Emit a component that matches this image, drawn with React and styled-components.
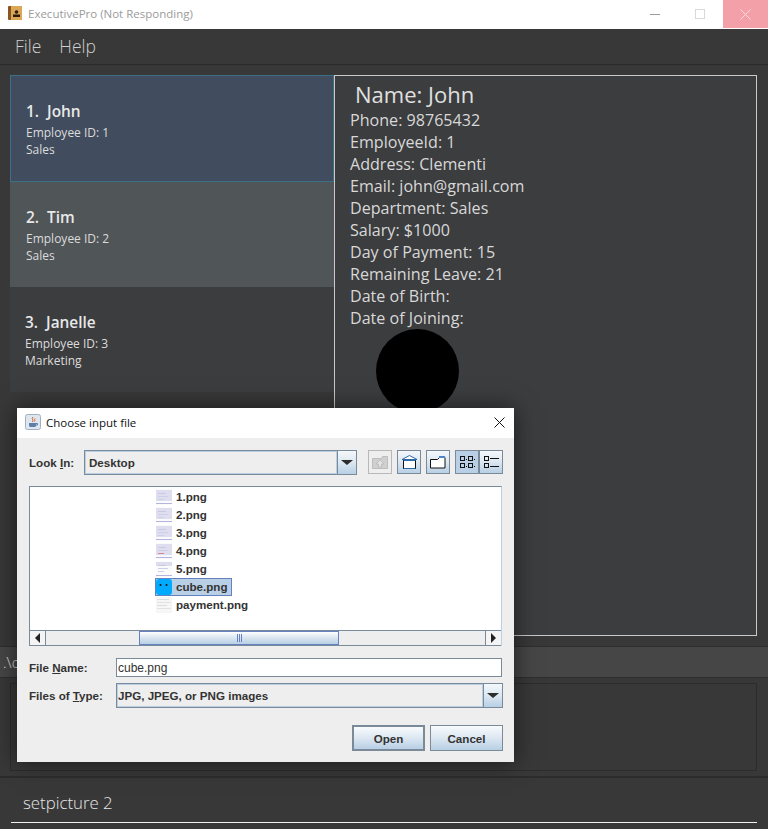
import React from "react";
import styled, { createGlobalStyle } from "styled-components";

const Global = createGlobalStyle`
  html, body { margin: 0; padding: 0; background: #383838; }
  * { box-sizing: border-box; }
`;

const Screen = styled.div`
  position: relative;
  width: 768px;
  height: 829px;
  overflow: hidden;
  background: #383838;
  display: flex;
  flex-direction: column;
  font-family: "Open Sans", "Noto Sans", sans-serif;
`;

const TitleBar = styled.div`
  height: 29px;
  flex: none;
  background: #fff;
  display: flex;
  align-items: flex-start;
`;
const AppIcon = styled.svg`
  width: 14px;
  height: 14px;
  margin: 6px 6px 0 8px;
  flex: none;
`;
const WindowTitle = styled.div`
  flex: 1;
  font-size: 11.5px;
  line-height: 28px;
  color: #9b9b9b;
  white-space: nowrap;
`;
const WinButton = styled.div`
  width: ${(p) => p.$w}px;
  height: 28px;
  display: flex;
  align-items: center;
  justify-content: center;
  background: ${(p) => p.$bg || "transparent"};
`;

const MenuBar = styled.div`
  height: 36px;
  flex: none;
  display: flex;
  align-items: center;
  gap: 18px;
  padding: 0 15px 2px;
  background: #383838;
  border-bottom: 1px solid #2a2a2a;
`;
const MenuItem = styled.span`
  font-size: 17.5px;
  font-weight: 300;
  color: #cfcfcf;
`;

const Main = styled.div`
  height: 581px;
  flex: none;
  display: flex;
  padding: 10px 11px 10px 10px;
  background: #383838;
`;
const List = styled.div`
  width: 324px;
  flex: none;
`;
const Card = styled.div`
  height: ${(p) => p.$h}px;
  background: ${(p) => p.$bg};
  border: ${(p) => (p.$border ? `1px solid ${p.$border}` : "none")};
  padding: ${(p) => p.$pt}px 0 0 ${(p) => p.$pl}px;
  display: flex;
  flex-direction: column;
`;
const CardName = styled.div`
  font-size: 15.4px;
  font-weight: 600;
  line-height: 22px;
  color: #e8e8e8;
  white-space: pre;
`;
const CardLine = styled.div`
  font-size: 12px;
  line-height: 17px;
  color: #dcdcdc;
`;
const CardId = styled(CardLine)`
  margin-top: 1px;
`;

const Details = styled.div`
  flex: 1;
  background: #3c3d3f;
  border: 1px solid #c9c9c9;
  padding: 3px 0 0 15px;
  color: #d8d8d8;
`;
const DetailName = styled.div`
  font-size: 22px;
  line-height: 30px;
  margin-left: 5px;
  color: #e0e0e0;
`;
const DetailLine = styled.div`
  font-size: 16.1px;
  line-height: 22px;
`;
const Avatar = styled.div`
  width: 83px;
  height: 84px;
  margin: 0 0 0 26px;
  border-radius: 50%;
  background: #000;
`;

const ResultHeader = styled.div`
  height: 32px;
  flex: none;
  background: #464646;
  border-top: 1px solid #2e2e2e;
  border-bottom: 1px solid #2e2e2e;
  padding-left: 3px;
  font-size: 15px;
  line-height: 31px;
  font-weight: 300;
  color: #e4e4e4;
`;
const ResultArea = styled.div`
  height: 100px;
  flex: none;
  padding: 5px 10px 5px 10px;
  border-bottom: 2px solid #2c2c2c;
`;
const ResultBox = styled.div`
  width: 747px;
  height: 88px;
  border: 1px solid #2c2c2c;
  background: #383838;
`;
const CommandArea = styled.div`
  flex: 1;
  padding: 14px 0 0 11px;
`;
const CommandInput = styled.div`
  width: 746px;
  height: 31px;
  border-bottom: 1px solid #f0f0f0;
  padding-left: 12px;
  font-size: 16.8px;
  line-height: 22px;
  font-weight: 300;
  color: #e6e6e6;
`;

/* Dialog */
const Dialog = styled.div`
  position: absolute;
  left: 17px;
  top: 408px;
  width: 497px;
  height: 354px;
  background: #eeeeee;
  box-shadow: 0 0 22px rgba(0, 0, 0, 0.55);
  display: flex;
  flex-direction: column;
  font-family: "Liberation Sans", Arial, sans-serif;
  font-size: 11.6px;
  font-weight: 700;
  color: #333;
`;
const DialogTitle = styled.div`
  height: 30px;
  flex: none;
  background: #fff;
  display: flex;
  align-items: center;
  padding: 0 9px 2px 8px;
  font-family: "Open Sans", "Noto Sans", sans-serif;
  font-weight: 400;
  font-size: 11.5px;
  color: #111;
`;
const DialogIcon = styled.svg`
  width: 16px;
  height: 16px;
  margin-right: 5px;
  flex: none;
`;
const DialogTitleText = styled.span`
  flex: 1;
`;
const DialogBody = styled.div`
  flex: 1;
  padding: 12px 11px 0 12px;
  display: flex;
  flex-direction: column;
`;
const TopRow = styled.div`
  display: flex;
  height: 25px;
  align-items: flex-start;
`;
const Label = styled.label`
  flex: none;
  width: ${(p) => p.$w}px;
  line-height: ${(p) => p.$lh || 25}px;
`;
const Combo = styled.div`
  width: ${(p) => p.$w}px;
  height: 25px;
  flex: none;
  display: flex;
  border: 1px solid #7a8a99;
  background: #eeeeee;
`;
const ComboValue = styled.div`
  flex: 1;
  border: 1px solid #b8cfe5;
  padding-left: ${(p) => p.$pl}px;
  line-height: 22px;
  color: #333;
`;
const ComboArrow = styled.div`
  width: 19px;
  flex: none;
  border-left: 1px solid #7a8a99;
  background: linear-gradient(#f4f8fb, #dce7f1 50%, #b8cfe5);
  display: flex;
  align-items: center;
  justify-content: center;
  &::after {
    content: "";
    border-left: 6px solid transparent;
    border-right: 6px solid transparent;
    border-top: 5px solid #2c2c2c;
  }
`;
const ToolGroup = styled.div`
  display: flex;
  margin-left: ${(p) => p.$ml}px;
`;
const ToolButton = styled.div`
  width: 24px;
  height: 24px;
  border: 1px solid ${(p) => (p.$disabled ? "#b8b8b8" : "#7a8a99")};
  background: ${(p) =>
    p.$disabled
      ? "#eeeeee"
      : p.$active
      ? "#b8cfe5"
      : "linear-gradient(#f4f8fb, #dce7f1 50%, #b8cfe5)"};
  display: flex;
  align-items: center;
  justify-content: center;
`;
const FileBox = styled.div`
  margin-top: 11px;
  width: 473px;
  height: 160px;
  flex: none;
  border: 1px solid #7a8a99;
  border-bottom: none;
  border-right-color: #b8cfe5;
  background: #fff;
  display: flex;
  flex-direction: column;
`;
const FileList = styled.div`
  flex: 1;
  padding: 1px 0 0 126px;
`;
const FileRow = styled.div`
  height: 18px;
  display: flex;
  align-items: center;
  gap: 4px;
  white-space: nowrap;
`;
const FileName = styled.span`
  line-height: 16px;
  padding: 0 2px 0 0;
  color: #333;
`;
const SelectedRow = styled.div`
  display: inline-flex;
  align-items: center;
  gap: 4px;
  height: 18px;
  border: 1px solid #6382bf;
  background: #b8cfe5;
  margin-left: -1px;
  padding-right: 1px;
`;
const Scrollbar = styled.div`
  height: 16px;
  flex: none;
  display: flex;
  background: #eeeeee;
  border-top: 1px solid #7a8a99;
  border-bottom: 1px solid #7a8a99;
`;
const ScrollArrow = styled.div`
  width: 16px;
  flex: none;
  background: #f4f4f4;
  border-${(p) => (p.$right ? "left" : "right")}: 1px solid #7a8a99;
  display: flex;
  align-items: center;
  justify-content: center;
  &::after {
    content: "";
    border-top: 5px solid transparent;
    border-bottom: 5px solid transparent;
    ${(p) => (p.$right ? "border-left: 5px solid #222;" : "border-right: 5px solid #222;")}
  }
`;
const ScrollTrack = styled.div`
  flex: 1;
  padding-left: 93px;
`;
const ScrollThumb = styled.div`
  width: 200px;
  height: 100%;
  border: 1px solid #6382bf;
  background: linear-gradient(#fff, #dce7f1 45%, #b8cfe5);
  display: flex;
  align-items: center;
  justify-content: center;
  gap: 1px;
`;
const Grip = styled.i`
  width: 1px;
  height: 8px;
  background: #6382bf;
`;
const NameRow = styled.div`
  margin-top: 12px;
  display: flex;
  height: 19px;
`;
const NameInput = styled.div`
  width: 386px;
  height: 19px;
  border: 1px solid #7a8a99;
  background: #fff;
  padding-left: 1px;
  font-size: 12px;
  font-weight: 400;
  line-height: 19px;
  color: #333;
`;
const TypeRow = styled.div`
  margin-top: 6px;
  display: flex;
  height: 25px;
`;
const Buttons = styled.div`
  margin-top: 17px;
  display: flex;
  justify-content: flex-end;
  gap: 5px;
`;
const Button = styled.div`
  height: 26px;
  width: 73px;
  border: ${(p) => (p.$default ? "2px" : "1px")} solid #7a8a99;
  background: linear-gradient(#f8fbfd, #dce7f1 50%, #b8cfe5);
  text-align: center;
  line-height: ${(p) => (p.$default ? 24 : 26)}px;
  color: #333;
`;

const Thumb = ({ variant }) => (
  <svg width="16" height="16" viewBox="0 0 16 16" style={{ flex: "none" }}>
    <rect width="16" height="16" fill="#fafafa" />
    <rect y="1" width="16" height={variant === 5 ? 4 : 11} fill="#dedeef" />
    <rect x="2" y="4" width="8" height="1" fill="#c9c9e6" />
    <rect x="2" y="7" width="10" height="1" fill="#cfcfe9" />
    <rect x="2" y="10" width="6" height="1" fill={variant === 4 ? "#d88" : "#cfcfe9"} />
    <rect y="14" width="16" height="1" fill="#b4b4e0" />
  </svg>
);
const PaymentThumb = () => (
  <svg width="16" height="16" viewBox="0 0 16 16" style={{ flex: "none" }}>
    <rect width="16" height="16" fill="#f6f6f6" />
    <rect x="1" y="2" width="12" height="1" fill="#ddd" />
    <rect x="1" y="5" width="14" height="1" fill="#e2e2e2" />
    <rect x="1" y="8" width="10" height="1" fill="#ddd" />
    <rect x="1" y="11" width="14" height="1" fill="#e2e2e2" />
  </svg>
);
const CubeThumb = () => (
  <svg width="16" height="16" viewBox="0 0 16 16" style={{ flex: "none" }}>
    <rect width="16" height="16" rx="3" fill="#00aaff" />
    <circle cx="4.5" cy="6" r="1" fill="#111" />
    <circle cx="10.5" cy="6" r="1" fill="#111" />
  </svg>
);

const UpFolder = () => (
  <svg width="20" height="18" viewBox="0 0 20 18">
    <path d="M2.500 5.500h9l1-2h5v12h-15z" fill="#cfcfcf" stroke="#bdbdbd" />
    <path d="M10 7l-4 4h2.500v3h3v-3H14z" fill="#e4e4e4" stroke="#b5b5b5" strokeWidth=".7" />
  </svg>
);
const HomeIcon = () => (
  <svg width="18" height="18" viewBox="0 0 18 18">
    <path d="M2 6.500L9.500 2.500l7.500 4z" fill="#fff" stroke="#2f6aa8" />
    <rect x="3.500" y="7.500" width="12" height="8" fill="#fff" stroke="#111" />
    <path d="M3.500 7.500h12M3.500 15.500h12" stroke="#2f6aa8" />
  </svg>
);
const NewFolderIcon = () => (
  <svg width="18" height="18" viewBox="0 0 18 18">
    <path d="M1.500 6.500h7l2-2h5.500v10.500h-14.500z" fill="#fff" stroke="#111" />
    <rect x="10" y="3" width="6" height="2" fill="#4c86c6" />
  </svg>
);
const DetailsIcon = () => (
  <svg width="18" height="18" viewBox="0 0 18 18" fill="none" stroke="#111">
    <rect x="2.500" y="3.500" width="4" height="4" />
    <rect x="2.500" y="10.500" width="4" height="4" />
    <rect x="10.500" y="3.500" width="4" height="4" />
    <rect x="10.500" y="10.500" width="4" height="4" />
    <path d="M8 6.500h1M8 13.500h1M16 6.500h1M16 13.500h1" />
  </svg>
);
const ListIcon = () => (
  <svg width="18" height="18" viewBox="0 0 18 18" fill="none" stroke="#111">
    <rect x="2.500" y="3.500" width="4" height="4" />
    <rect x="2.500" y="10.500" width="4" height="4" />
    <path d="M8 5.500h9M8 13.500h9" />
  </svg>
);

const files = [1, 2, 3, 4, 5];

export default function App() {
  return (
    <Screen>
      <Global />
      <TitleBar>
        <AppIcon viewBox="0 0 14 14">
          <rect width="14" height="14" rx="1" fill="#8a5423" />
          <rect x="3" y="0" width="11" height="14" fill="#dba655" />
          <circle cx="8.500" cy="6" r="1.800" fill="#2a1c0c" />
          <rect x="5" y="8.500" width="7" height="2.500" fill="#2a1c0c" />
        </AppIcon>
        <WindowTitle>ExecutivePro (Not Responding)</WindowTitle>
        <WinButton $w={43}>
          <svg width="10" height="10" viewBox="0 0 10 10">
            <path d="M0 5.500h10" stroke="#9d9d9d" />
          </svg>
        </WinButton>
        <WinButton $w={47}>
          <svg width="10" height="10" viewBox="0 0 10 10">
            <rect x=".5" y=".5" width="9" height="9" fill="none" stroke="#d9d9d9" />
          </svg>
        </WinButton>
        <WinButton $w={45} $bg="#f4a0a8">
          <svg width="11" height="11" viewBox="0 0 11 11">
            <path d="M.5.500l10 10M10.500.500l-10 10" stroke="#fbd9dc" />
          </svg>
        </WinButton>
      </TitleBar>

      <MenuBar>
        <MenuItem>File</MenuItem>
        <MenuItem>Help</MenuItem>
      </MenuBar>

      <Main>
        <List>
          <Card $h={107} $bg="#414c5e" $border="#3d7087" $pt={25} $pl={15}>
            <CardName>1.  John</CardName>
            <CardId>Employee ID: 1</CardId>
            <CardLine>Sales</CardLine>
          </Card>
          <Card $h={105} $bg="#505558" $pt={25} $pl={16}>
            <CardName>2.  Tim</CardName>
            <CardId>Employee ID: 2</CardId>
            <CardLine>Sales</CardLine>
          </Card>
          <Card $h={105} $bg="#3c3d3f" $pt={25} $pl={15}>
            <CardName>3.  Janelle</CardName>
            <CardId>Employee ID: 3</CardId>
            <CardLine>Marketing</CardLine>
          </Card>
        </List>
        <Details>
          <DetailName>Name: John</DetailName>
          <DetailLine>Phone: 98765432</DetailLine>
          <DetailLine>EmployeeId: 1</DetailLine>
          <DetailLine>Address: Clementi</DetailLine>
          <DetailLine>Email: john@gmail.com</DetailLine>
          <DetailLine>Department: Sales</DetailLine>
          <DetailLine>Salary: $1000</DetailLine>
          <DetailLine>Day of Payment: 15</DetailLine>
          <DetailLine>Remaining Leave: 21</DetailLine>
          <DetailLine>Date of Birth:</DetailLine>
          <DetailLine>Date of Joining:</DetailLine>
          <Avatar />
        </Details>
      </Main>

      <ResultHeader>.\c</ResultHeader>
      <ResultArea>
        <ResultBox />
      </ResultArea>
      <CommandArea>
        <CommandInput>setpicture 2</CommandInput>
      </CommandArea>

      <Dialog>
        <DialogTitle>
          <DialogIcon viewBox="0 0 16 16">
            <rect x=".5" y=".5" width="15" height="15" rx="2" fill="#dfe6ee" stroke="#9fb0c2" />
            <path d="M4 9h7v2.500c0 1-1 1.500-2 1.500H6c-1 0-2-.5-2-1.500z" fill="#5b7fa8" />
            <path d="M8 3c-2 2 1 2.500-.5 5M10 4.500c-1 1.200.5 1.500-.5 3" fill="none" stroke="#d6602a" />
            <path d="M11 9.500h1.500v1.500H11" fill="none" stroke="#5b7fa8" />
          </DialogIcon>
          <DialogTitleText>Choose input file</DialogTitleText>
          <svg width="11" height="11" viewBox="0 0 11 11">
            <path d="M.5.500l10 10M10.500.500l-10 10" stroke="#111" />
          </svg>
        </DialogTitle>
        <DialogBody>
          <TopRow>
            <Label $w={55}>
              Look <u>I</u>n:
            </Label>
            <Combo $w={273}>
              <ComboValue $pl={3}>Desktop</ComboValue>
              <ComboArrow />
            </Combo>
            <ToolGroup $ml={11}>
              <ToolButton $disabled>
                <UpFolder />
              </ToolButton>
            </ToolGroup>
            <ToolGroup $ml={5}>
              <ToolButton>
                <HomeIcon />
              </ToolButton>
            </ToolGroup>
            <ToolGroup $ml={5}>
              <ToolButton>
                <NewFolderIcon />
              </ToolButton>
            </ToolGroup>
            <ToolGroup $ml={5}>
              <ToolButton $active>
                <DetailsIcon />
              </ToolButton>
              <ToolButton>
                <ListIcon />
              </ToolButton>
            </ToolGroup>
          </TopRow>
          <FileBox>
            <FileList>
              {files.map((n) => (
                <FileRow key={n}>
                  <Thumb variant={n} />
                  <FileName>{n}.png</FileName>
                </FileRow>
              ))}
              <FileRow>
                <SelectedRow>
                  <CubeThumb />
                  <FileName>cube.png</FileName>
                </SelectedRow>
              </FileRow>
              <FileRow>
                <PaymentThumb />
                <FileName>payment.png</FileName>
              </FileRow>
            </FileList>
            <Scrollbar>
              <ScrollArrow />
              <ScrollTrack>
                <ScrollThumb>
                  <Grip />
                  <Grip />
                  <Grip />
                </ScrollThumb>
              </ScrollTrack>
              <ScrollArrow $right />
            </Scrollbar>
          </FileBox>
          <NameRow>
            <Label $w={87} $lh={20}>
              File <u>N</u>ame:
            </Label>
            <NameInput>cube.png</NameInput>
          </NameRow>
          <TypeRow>
            <Label $w={87}>
              Files of <u>T</u>ype:
            </Label>
            <Combo $w={387}>
              <ComboValue $pl={0}>JPG, JPEG, or PNG images</ComboValue>
              <ComboArrow />
            </Combo>
          </TypeRow>
          <Buttons>
            <Button $default>Open</Button>
            <Button>Cancel</Button>
          </Buttons>
        </DialogBody>
      </Dialog>
    </Screen>
  );
}
